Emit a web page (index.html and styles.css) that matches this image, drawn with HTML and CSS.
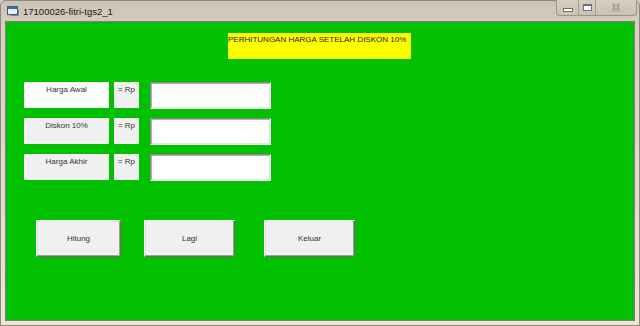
FILE: index.html
```html
<!DOCTYPE html>
<html lang="id">
<head>
    <meta charset="UTF-8">
    <title>17100026-fitri-tgs2_1</title>
    <link rel="stylesheet" href="styles.css">
</head>
<body>
    <div class="window">
        <div class="titlebar">
            <svg class="app-icon" width="12" height="11" viewBox="0 0 12 11">
                <rect x="0.5" y="0.5" width="10" height="8" fill="#e8eef6" stroke="#4a5a70"/>
                <rect x="1" y="1" width="9" height="2" fill="#3c6cb4"/>
                <path d="M3 9.5 L11.5 9.5 L11.5 3.5" fill="none" stroke="#7a8899"/>
            </svg>
            <span class="title-text">17100026-fitri-tgs2_1</span>
            <div class="caption-buttons">
                <div class="cap-btn min">
                    <span class="min-glyph"></span>
                </div>
                <div class="cap-btn max">
                    <span class="max-glyph"></span>
                </div>
                <div class="cap-btn close">
                    <svg width="10" height="9" viewBox="0 0 10 9">
                        <path d="M1.5 1 L8.5 8 M8.5 1 L1.5 8" stroke="#6b6b6b" stroke-width="2.2"/>
                        <path d="M1.5 1 L8.5 8 M8.5 1 L1.5 8" stroke="#ffffff" stroke-width="1"/>
                    </svg>
                </div>
            </div>
        </div>

        <div class="client">
            <div class="header-label">PERHITUNGAN HARGA SETELAH DISKON 10%</div>

            <div class="rows">
                <div class="row">
                    <div class="label white">Harga Awal</div>
                    <div class="rp">= Rp</div>
                    <div class="textbox"></div>
                </div>
                <div class="row">
                    <div class="label">Diskon 10%</div>
                    <div class="rp">= Rp</div>
                    <div class="textbox"></div>
                </div>
                <div class="row">
                    <div class="label">Harga Akhir</div>
                    <div class="rp">= Rp</div>
                    <div class="textbox"></div>
                </div>
            </div>

            <div class="buttons">
                <button class="btn btn-hitung">Hitung</button>
                <button class="btn btn-lagi">Lagi</button>
                <button class="btn btn-keluar">Keluar</button>
            </div>
        </div>
    </div>
</body>
</html>
```

FILE: styles.css
```css
html, body {
    margin: 0;
    padding: 0;
    background: #d4ccbd;
}

.window {
    width: 640px;
    height: 326px;
    box-sizing: border-box;
    background: linear-gradient(#cbc3b4, #d8d1c3 30px, #ece5d6);
    border: 1px solid #8f887c;
    border-radius: 6px 6px 0 0;
    padding: 0 4px 4px 4px;
    display: flex;
    flex-direction: column;
    font-family: "Liberation Sans", Arial, sans-serif;
}

.titlebar {
    height: 20px;
    display: flex;
    align-items: center;
    position: relative;
}

.app-icon {
    margin-left: 2px;
    margin-top: 1px;
}

.title-text {
    margin-left: 4px;
    font-size: 9.5px;
    color: #1a1a1a;
}

.caption-buttons {
    position: absolute;
    top: -1px;
    right: -2px;
    display: flex;
    height: 15px;
    border: 1px solid #9c9585;
    border-top: none;
    border-radius: 0 0 4px 4px;
    background: linear-gradient(#d6cfc1, #cac3b4);
}

.cap-btn {
    display: flex;
    align-items: center;
    justify-content: center;
    border-right: 1px solid #a89f91;
}

.cap-btn.min {
    width: 21px;
}

.cap-btn.max {
    width: 16px;
}

.cap-btn.close {
    width: 40px;
    border-right: none;
}

.min-glyph {
    width: 8px;
    height: 2px;
    margin-top: 5px;
    background: #fff;
    border: 1px solid #6e6e6e;
}

.max-glyph {
    width: 7px;
    height: 4px;
    background: #fff;
    border: 1px solid #6e6e6e;
    border-top-width: 2px;
}

.client {
    flex: 1;
    background: #00c000;
    border: 1px solid #7d7d7d;
    font-size: 8px;
    color: #333;
    padding: 11px 0 0 18px;
}

.header-label {
    margin-left: 204px;
    width: 183px;
    height: 26px;
    background: #ffff00;
    color: #1a1a1a;
    line-height: 10px;
    padding-top: 2px;
    box-sizing: border-box;
}

.rows {
    margin-top: 23px;
    display: flex;
    flex-direction: column;
    gap: 10px;
}

.row {
    display: flex;
    gap: 5px;
    height: 26px;
}

.label {
    width: 85px;
    height: 26px;
    background: #f0f0f0;
    text-align: center;
    line-height: 10px;
    padding-top: 2px;
    box-sizing: border-box;
    border: 1px solid #f7f7f7;
}

.label.white {
    background: #ffffff;
    border-color: #fafafa;
}

.rp {
    width: 25px;
    height: 26px;
    background: #f0f0f0;
    text-align: center;
    line-height: 10px;
    padding-top: 2px;
    box-sizing: border-box;
    border: 1px solid #f7f7f7;
}

.textbox {
    margin-left: 6px;
    width: 121px;
    height: 27px;
    background: #fff;
    box-sizing: border-box;
    border-top: 1px solid #8a8a8a;
    border-left: 1px solid #8a8a8a;
    border-right: 1px solid #f4f4f4;
    border-bottom: 1px solid #f4f4f4;
    box-shadow: inset 1px 1px 0 #b0b0b0, inset -1px -1px 0 #e3e3e3;
}

.buttons {
    margin-top: 40px;
    margin-left: 12px;
    display: flex;
}

.btn {
    height: 37px;
    background: #f0f0f0;
    font-family: "Liberation Sans", Arial, sans-serif;
    font-size: 8px;
    color: #333;
    padding: 0;
    border-top: 1px solid #ffffff;
    border-left: 1px solid #ffffff;
    border-right: 1px solid #6a6a6a;
    border-bottom: 1px solid #6a6a6a;
    box-shadow: inset -1px -1px 0 #a0a0a0, inset 1px 1px 0 #e3e3e3;
    border-radius: 0;
}

.btn-hitung {
    width: 85px;
}

.btn-lagi {
    width: 91px;
    margin-left: 23px;
}

.btn-keluar {
    width: 91px;
    margin-left: 29px;
}
```
